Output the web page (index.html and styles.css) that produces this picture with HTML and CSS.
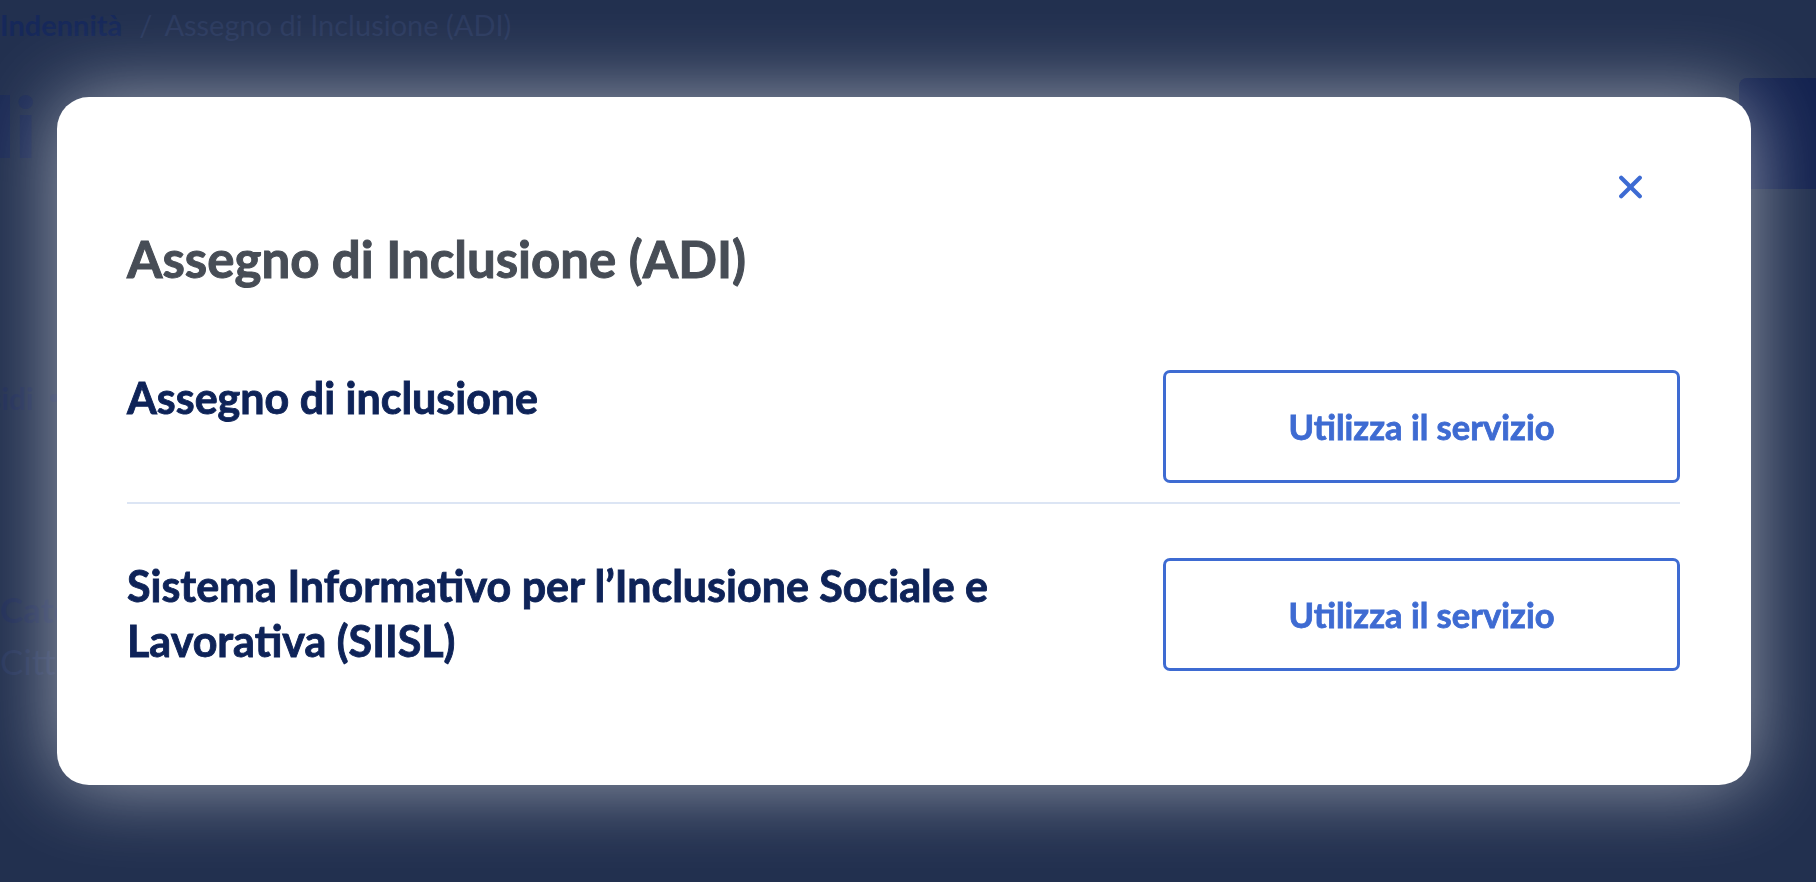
FILE: index.html
```html
<!DOCTYPE html>
<html lang="it">
<head>
<meta charset="utf-8">
<title>Assegno di Inclusione (ADI)</title>
<link rel="stylesheet" href="styles.css">
</head>
<body>
<div class="page" aria-hidden="true">
  <nav class="crumbs">
    <span class="crumb-link">Indennità</span>
    <span class="crumb-sep">/</span>
    <span class="crumb-current">Assegno di Inclusione (ADI)</span>
  </nav>
  <div class="page-head">
    <h1 class="page-title">Dettagli</h1>
    <span class="page-action"></span>
  </div>
  <div class="page-meta">
    <span class="meta-strong">Sussidi</span>
    <span class="meta-dot"></span>
  </div>
  <div class="page-cat">
    <div class="cat-label">Categoria</div>
    <div class="cat-value">Cittadini</div>
  </div>
</div>

<div class="modal" role="dialog" aria-labelledby="modal-title">
  <div class="modal-head">
    <button class="close" type="button" aria-label="Chiudi">
      <svg width="25" height="24" viewBox="0 0 25 24" fill="none" stroke="currentColor" stroke-width="4.2" stroke-linecap="round">
        <path d="M3.2 2.8 L21.8 21.2"/>
        <path d="M21.8 2.8 L3.2 21.2"/>
      </svg>
    </button>
  </div>
  <h2 class="modal-title" id="modal-title">Assegno di Inclusione (ADI)</h2>
  <ul class="services">
    <li class="service">
      <h3 class="service-name">Assegno di inclusione</h3>
      <a class="service-btn" href="#">Utilizza il servizio</a>
    </li>
    <li class="service">
      <h3 class="service-name">Sistema Informativo per l’Inclusione Sociale e Lavorativa (SIISL)</h3>
      <a class="service-btn" href="#">Utilizza il servizio</a>
    </li>
  </ul>
</div>
</body>
</html>
```

FILE: styles.css
```css
* { box-sizing: border-box; }

html, body {
  margin: 0;
  height: 100%;
}

body {
  background: #22304f;
  font-family: Lato, "Noto Sans", sans-serif;
  overflow: hidden;
}

/* background page (under the dialog backdrop) */
.page {
  display: flex;
  flex-direction: column;
}

.crumbs {
  display: flex;
  align-items: baseline;
  padding-top: 7px;
  font-size: 29px;
  line-height: 36px;
  color: #2b3a5f;
}

.crumb-link {
  font-weight: 700;
  color: #16285a;
}

.crumb-sep {
  margin: 0 12px 0 17px;
}

.page-head {
  display: flex;
  justify-content: space-between;
  align-items: flex-start;
  margin-top: 41px;
}

.page-title {
  margin: 0 0 0 -262px;
  font-size: 84px;
  line-height: 84px;
  font-weight: 900;
  color: #1b2a55;
}

.page-action {
  width: 100px;
  height: 111px;
  margin: -6px -23px 0 0;
  border-radius: 8px;
  background: #13224f;
}

.page-meta {
  display: flex;
  align-items: center;
  margin-top: 191px;
  font-size: 30px;
  line-height: 36px;
  font-weight: 700;
  color: #1e2c55;
}

.meta-strong {
  margin-left: -58px;
}

.meta-dot {
  width: 8px;
  height: 8px;
  margin-left: 16px;
  border-radius: 50%;
  background: #1e2c55;
}

.page-cat {
  margin-top: 172px;
  font-size: 35px;
  line-height: 42px;
}

.cat-label {
  font-weight: 700;
  color: #1e2c55;
}

.cat-value {
  margin-top: 10px;
  color: #26355b;
}

/* dialog */
.modal {
  position: fixed;
  left: 57px;
  top: 97px;
  width: 1694px;
  height: 688px;
  padding: 78px 71px 0 70px;
  background: #ffffff;
  border-radius: 32px;
  box-shadow: 0 0 80px 0 rgba(255, 255, 255, 0.55);
}

.modal-head {
  display: flex;
  justify-content: flex-end;
  padding-right: 37px;
  height: 24px;
}

.close {
  display: block;
  width: 25px;
  height: 24px;
  padding: 0;
  border: 0;
  background: none;
  color: #3d6bd3;
  cursor: pointer;
}

.close svg {
  display: block;
}

.modal-title {
  margin: 29px 0 0;
  font-size: 51px;
  line-height: 61px;
  font-weight: 700;
  color: #474d56;
  -webkit-text-stroke: 1px #474d56;
}

.services {
  margin: 81px 0 0;
  padding: 0;
  list-style: none;
}

.service {
  display: grid;
  grid-template-columns: 1fr 517px;
  column-gap: 36px;
  align-items: start;
}

.service:first-child {
  padding-bottom: 19px;
  border-bottom: 2px solid #dce5f4;
}

.service + .service {
  padding-top: 54px;
}

.service-name {
  margin: 0;
  font-size: 43px;
  line-height: 55px;
  font-weight: 700;
  color: #0e2358;
  -webkit-text-stroke: 0.9px #0e2358;
}

.service-btn {
  display: flex;
  align-items: center;
  justify-content: center;
  height: 113px;
  border: 3.5px solid #3e6bd2;
  border-radius: 7px;
  color: #3e6bd2;
  font-size: 34.5px;
  line-height: 1.2;
  font-weight: 700;
  text-decoration: none;
  -webkit-text-stroke: 0.8px #3e6bd2;
}
```
